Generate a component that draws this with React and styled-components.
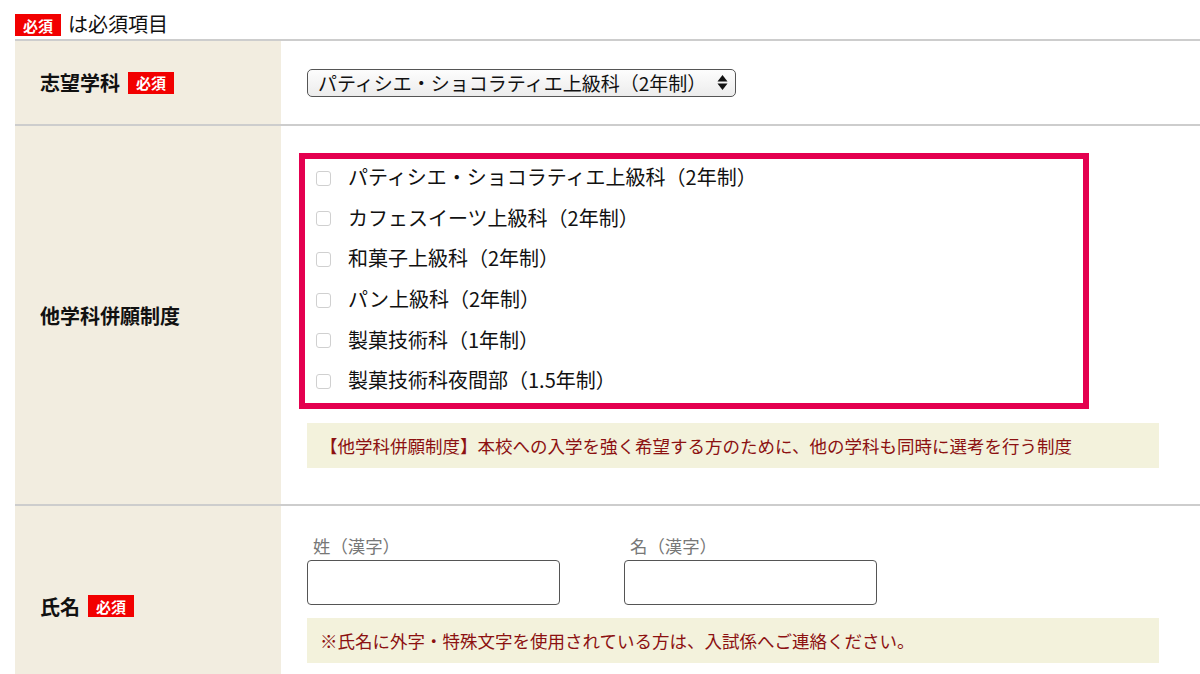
import styled, { createGlobalStyle } from 'styled-components';

const GlobalStyle = createGlobalStyle`
  body {
    margin: 0;
    background: #fff;
    font-family: "Noto Sans CJK JP", "Noto Sans", sans-serif;
    color: #111;
  }
`

const Page = styled.div`
  padding-left: 15px;
  overflow: hidden;
  height: 674px;
`

const Legend = styled.div`
  display: flex;
  align-items: flex-end;
  gap: 7px;
  height: 39px;
  box-sizing: border-box;
  padding-bottom: 3px;
  font-size: 20px;
  line-height: 24px;
`

const Badge = styled.span`
  display: inline-flex;
  align-items: center;
  justify-content: center;
  width: 46px;
  height: 22px;
  background: #f20000;
  color: #fff;
  font-size: 15px;
  font-weight: 700;
  line-height: 1;
`

const Row = styled.div`
  display: grid;
  grid-template-columns: 266px 1fr;
  border-top: 2px solid #cdcdcd;
  min-height: ${p => p.$h}px;
`

const Label = styled.div`
  background: #f2ede0;
  display: flex;
  align-items: center;
  gap: 8px;
  padding-left: 25px;
  font-size: 20px;
  font-weight: 700;
`

const Cell = styled.div`
  display: flex;
  flex-direction: column;
  justify-content: ${p => (p.$center ? 'center' : 'flex-start')};
  padding: ${p => p.$pad};
`

const SelectBox = styled.div`
  display: flex;
  align-items: center;
  width: 429px;
  height: 28px;
  box-sizing: border-box;
  border: 1px solid #555;
  border-radius: 5px;
  background: linear-gradient(#fdfdfd, #ececec);
  padding-right: 7px;
`

const Select = styled.select`
  appearance: none;
  border: none;
  background: transparent;
  flex: 1;
  font: inherit;
  font-size: 19px;
  color: #111;
  padding: 0 0 0 10px;
  outline: none;
`

const HighlightBox = styled.div`
  width: 790px;
  box-sizing: border-box;
  border: 6px solid #e4004f;
  margin-left: -8px;
  padding-left: 11px;
  display: flex;
  flex-direction: column;
`

const CheckItem = styled.label`
  display: flex;
  align-items: center;
  gap: 17px;
  height: 40.6px;
  box-sizing: border-box;
  padding-bottom: 5px;
  font-size: 20px;
`

const Check = styled.span`
  width: 15px;
  height: 15px;
  box-sizing: border-box;
  border: 1px solid #d0d0d0;
  border-radius: 3px;
  background: #fff;
  margin-top: 3px;
`

const Note = styled.div`
  width: 852px;
  box-sizing: border-box;
  height: 45px;
  background: #f3f2dc;
  color: #8c1111;
  font-size: 17.5px;
  display: flex;
  align-items: center;
  padding-left: 13px;
  margin-top: ${p => p.$mt}px;
`

const NameFields = styled.div`
  display: flex;
  gap: 64px;
`

const Field = styled.div`
  display: flex;
  flex-direction: column;
`

const FieldLabel = styled.span`
  color: #777;
  font-size: 17.4px;
  padding-left: 6px;
  height: 27px;
`

const TextInput = styled.input`
  width: 253px;
  height: 45px;
  box-sizing: border-box;
  border: 1px solid #555;
  border-radius: 4px;
`

const Arrows = () => (
  <svg width="11" height="17" viewBox="0 0 11 17">
    <path d="M5.5 1 L10.5 7.5 L0.5 7.5 Z" fill="#111" />
    <path d="M5.5 16 L10.5 9.5 L0.5 9.5 Z" fill="#111" />
  </svg>
)

const courses = [
  'パティシエ・ショコラティエ上級科（2年制）',
  'カフェスイーツ上級科（2年制）',
  '和菓子上級科（2年制）',
  'パン上級科（2年制）',
  '製菓技術科（1年制）',
  '製菓技術科夜間部（1.5年制）',
]

export default function App() {
  return (
    <Page>
      <GlobalStyle />
      <Legend>
        <Badge>必須</Badge>
        <span>は必須項目</span>
      </Legend>

      <Row $h={83}>
        <Label>志望学科<Badge>必須</Badge></Label>
        <Cell $pad="0 0 0 26px" $center>
          <SelectBox>
            <Select defaultValue={courses[0]}>
              {courses.slice(0, 4).map(c => <option key={c}>{c}</option>)}
            </Select>
            <Arrows />
          </SelectBox>
        </Cell>
      </Row>

      <Row $h={378}>
        <Label>他学科併願制度</Label>
        <Cell $pad="27px 0 0 26px">
          <HighlightBox>
            {courses.map(c => (
              <CheckItem key={c}>
                <Check />
                {c}
              </CheckItem>
            ))}
          </HighlightBox>
          <Note $mt={14}>【他学科併願制度】本校への入学を強く希望する方のために、他の学科も同時に選考を行う制度</Note>
        </Cell>
      </Row>

      <Row $h={200}>
        <Label>氏名<Badge>必須</Badge></Label>
        <Cell $pad="27px 0 0 26px">
          <NameFields>
            <Field>
              <FieldLabel>姓（漢字）</FieldLabel>
              <TextInput />
            </Field>
            <Field>
              <FieldLabel>名（漢字）</FieldLabel>
              <TextInput />
            </Field>
          </NameFields>
          <Note $mt={13}>※氏名に外字・特殊文字を使用されている方は、入試係へご連絡ください。</Note>
        </Cell>
      </Row>
    </Page>
  )
}
